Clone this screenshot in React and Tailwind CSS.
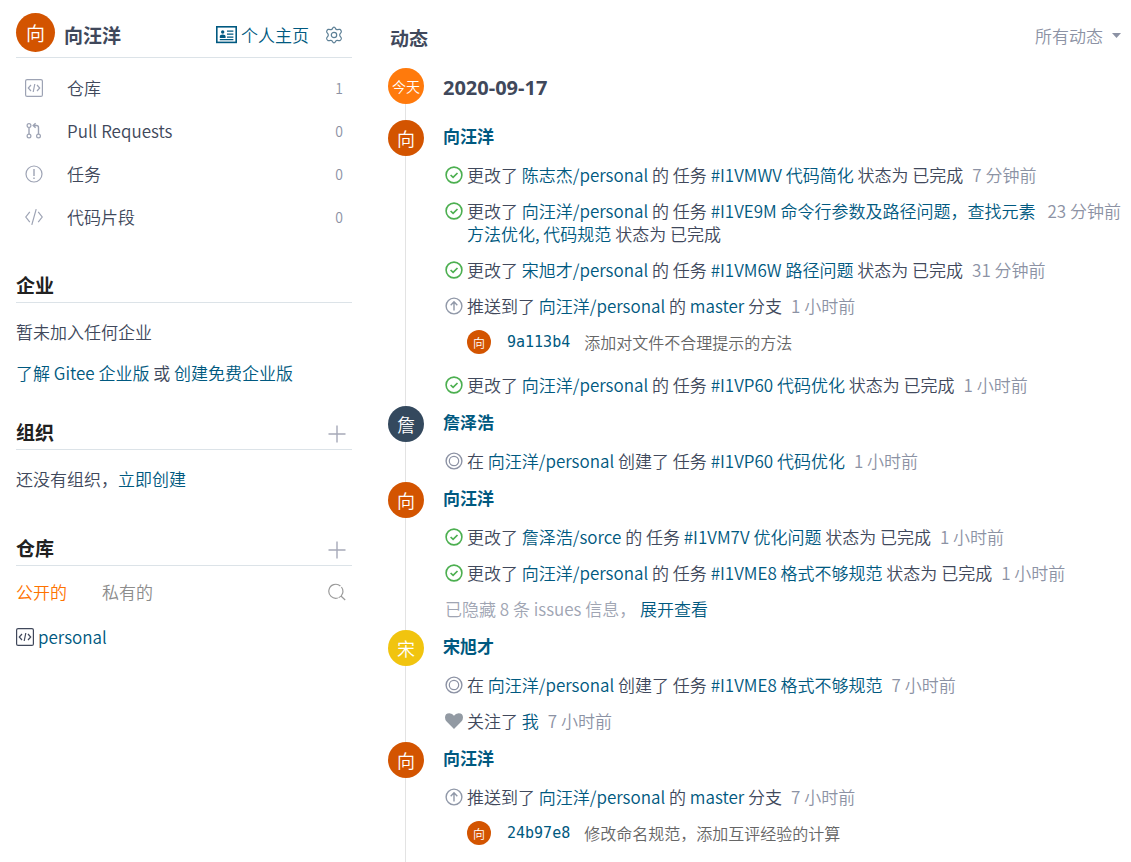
import React, { useState } from 'react';

const Svg = ({ className = 'size-[18px]', viewBox = '0 0 18 18', children }) => (
  <svg
    className={`shrink-0 ${className}`}
    viewBox={viewBox}
    fill="none"
    stroke="currentColor"
    strokeWidth="1.2"
    aria-hidden="true"
  >
    {children}
  </svg>
);

const RepoIcon = () => (
  <Svg>
    <rect x="0.6" y="0.6" width="16.8" height="16.8" rx="1.5" />
    <path d="M6 6 3.3 9 6 12M12 6l2.7 3L12 12M9.8 5 8.2 13" />
  </Svg>
);

const PullIcon = () => (
  <Svg>
    <circle cx="4" cy="3.6" r="1.9" />
    <circle cx="4" cy="14" r="1.9" />
    <circle cx="13.5" cy="14" r="1.9" />
    <path d="M4 5.5v6.6M13.5 12.1V5.5q0-2-2-2H8.5M10.6 1.2 8.2 3.5l2.4 2.3" strokeWidth="1.4" />
  </Svg>
);

const TaskIcon = () => (
  <Svg>
    <circle cx="9" cy="9" r="8" />
    <path d="M9 4v7M9 12.5v1.6" strokeWidth="1.4" />
  </Svg>
);

const CodeIcon = () => (
  <Svg>
    <path d="M4.8 3.8.8 9l4 5.2M13.2 3.8l4 5.2-4 5.2M11.2 1.2 6.8 16.8" />
  </Svg>
);

const CardIcon = () => (
  <Svg className="h-[18px] w-[21px]" viewBox="0 0 21 18">
    <rect x="0.8" y="0.8" width="19.4" height="15.6" strokeWidth="1.6" />
    <circle cx="6.7" cy="6" r="1.7" fill="currentColor" stroke="none" />
    <path d="M3.8 12V10q0-1.6 2.9-1.6T9.6 10v2z" fill="currentColor" stroke="none" />
    <path d="M11 5.2h6.4M11 8.2h6.4M11 11.2h6.4M3.8 13.6h13.6" />
  </Svg>
);

const GearIcon = () => (
  <Svg>
    <path d="M9 1.2q1 0 1.5 1.3.5 1.4 2 1.1 1.5-.4 2.4-.2.9.4 1.4 1.7.3 1-.7 2-.9.9-.9 1.9t.9 1.9q1 1 .7 2-.5 1.3-1.4 1.7-.9.2-2.4-.2-1.5-.3-2 1.1Q10 16.8 9 16.8t-1.5-1.3q-.5-1.4-2-1.1-1.5.4-2.4.2-.9-.4-1.4-1.7-.3-1 .7-2 .9-.9.9-1.9t-.9-1.9q-1-1-.7-2 .5-1.3 1.4-1.7.9-.2 2.4.2 1.5.3 2-1.1Q8 1.2 9 1.2z" />
    <circle cx="9" cy="9" r="2.7" />
  </Svg>
);

const PlusIcon = () => (
  <Svg>
    <path d="M9 0.5v17M0.5 9h17" strokeWidth="1.4" />
  </Svg>
);

const SearchIcon = () => (
  <Svg>
    <path d="M9.8 15A7 7 0 1 1 12.4 3M13.4 4A7 7 0 0 1 10.6 14.8M13.2 13.2l4 3.8" />
  </Svg>
);

const icons = {
  done: (
    <Svg className="size-[18px] text-[#4caf50]">
      <circle cx="9" cy="9" r="7.9" strokeWidth="1.6" />
      <path d="m5.6 9 2.5 2.4 4.4-4.4" strokeWidth="1.7" />
    </Svg>
  ),
  push: (
    <Svg className="size-[18px] text-[#9098a8]">
      <circle cx="9" cy="9" r="7.9" strokeWidth="1.4" />
      <path d="M9 13.6V5M5.7 8.2 9 4.8l3.3 3.4" strokeWidth="1.4" />
    </Svg>
  ),
  open: (
    <Svg className="size-[18px] text-[#8c92a4]">
      <circle cx="9" cy="9" r="7.9" strokeWidth="1.4" />
      <circle cx="9" cy="9" r="4.7" />
    </Svg>
  ),
  heart: (
    <Svg className="size-[18px] text-[#929aa3]">
      <path
        d="M9 17 1.6 9.6Q0 7.8 0 5.6 0 1.2 4.4 1.2 7.4 1.2 9 3.8q1.6-2.6 4.6-2.6Q18 1.2 18 5.6q0 2.2-1.6 4z"
        fill="currentColor"
        stroke="none"
      />
    </Svg>
  ),
};

const Link = ({ children, className = '' }) => (
  <a href="#" className={`text-[#005980] hover:underline ${className}`}>{children}</a>
);

const Avatar = ({ name, className = 'bg-[#d35400]' }) => (
  <span className={`flex size-9 shrink-0 items-center justify-center rounded-full text-[18px] text-white ${className}`}>
    {name}
  </span>
);

const Row = ({ icon, time, children }) => (
  <li className="flex items-start">
    <span className="flex h-[23px] w-6 shrink-0 items-center pl-[2px]">{icons[icon]}</span>
    <p>{children}</p>
    <time className="ml-[9px] shrink-0 text-[#8c92a4]">{time}</time>
  </li>
);

const Commit = ({ hash, children }) => (
  <li className="mb-[6px] flex h-6 items-center pl-6">
    <span className="flex size-6 shrink-0 items-center justify-center rounded-full bg-[#d35400] text-[12px] text-white">向</span>
    <Link className="ml-4 font-['DejaVu_Sans_Mono',monospace] text-[15px]">{hash}</Link>
    <span className="ml-[14px] text-base text-[#666666]">{children}</span>
  </li>
);

const StatusChange = ({ repo, issue, time }) => (
  <Row icon="done" time={time}>
    更改了 <Link>{repo}</Link> 的 任务 <Link>{issue}</Link> 状态为 已完成
  </Row>
);

const IssueCreated = ({ issue, time }) => (
  <Row icon="open" time={time}>
    在 <Link>向汪洋/personal</Link> 创建了 任务 <Link>{issue}</Link>
  </Row>
);

const Push = ({ time }) => (
  <Row icon="push" time={time}>
    推送到了 <Link>向汪洋/personal</Link> 的 <Link>master</Link> 分支
  </Row>
);

const Group = ({ user, color, children }) => (
  <li className="flex last:grow">
    <div className="flex w-9 shrink-0 flex-col">
      <Avatar name={user[0]} className={color} />
      <span className="ml-[17px] w-px grow bg-[#e3e3e3]" />
    </div>
    <div className="min-w-0 flex-1 pt-1 pb-[10px] pl-[19px]">
      <h3 className="mb-4 font-bold"><Link>{user}</Link></h3>
      <ul className="flex flex-col gap-[13px]">{children}</ul>
    </div>
  </li>
);

const menu = [
  { label: '仓库', count: 1, icon: <RepoIcon /> },
  { label: 'Pull Requests', count: 0, icon: <PullIcon /> },
  { label: '任务', count: 0, icon: <TaskIcon /> },
  { label: '代码片段', count: 0, icon: <CodeIcon /> },
];

const SectionTitle = ({ title, addLabel }) => (
  <div className="mt-[33px] flex items-center justify-between border-b border-[#dce3e8] pr-[6px] pb-[3px]">
    <h2 className="text-[19px] leading-7 font-bold text-[#212121]">{title}</h2>
    {addLabel && (
      <button type="button" aria-label={addLabel} className="mt-1 text-[#a6a9b8]">
        <PlusIcon />
      </button>
    )}
  </div>
);

const Sidebar = () => {
  const [tab, setTab] = useState('public');

  return (
    <aside className="w-[336px] shrink-0 pt-[13px] leading-6">
      <header className="flex items-center border-b border-[#dce3e8] pb-[5px]">
        <span className="flex size-[39px] items-center justify-center rounded-full bg-[#d35400] text-[19px] text-white">向</span>
        <div className="flex flex-1 items-center pt-1 pl-[9px]">
          <h1 className="text-[19px] font-bold">向汪洋</h1>
          <Link className="ml-auto flex items-center gap-1"><CardIcon />个人主页</Link>
          <button type="button" aria-label="设置" className="mr-[9px] ml-4 text-[#5c7f95]"><GearIcon /></button>
        </div>
      </header>

      <nav className="pt-2">
        {menu.map((item) => (
          <a key={item.label} href="#" className="flex h-[43px] items-center px-[9px]">
            <span className="text-[#9da3b4]">{item.icon}</span>
            <span className="ml-6">{item.label}</span>
            <span className="ml-auto text-sm text-[#8c92a4]">{item.count}</span>
          </a>
        ))}
      </nav>

      <section>
        <SectionTitle title="企业" />
        <p className="pt-[17px]">暂未加入任何企业</p>
        <p className="pt-[17px]">
          <Link>了解 Gitee 企业版</Link> 或 <Link>创建免费企业版</Link>
        </p>
      </section>

      <section className="pb-[10px]">
        <SectionTitle title="组织" addLabel="创建组织" />
        <p className="pt-[17px]">还没有组织，<Link>立即创建</Link></p>
      </section>

      <section>
        <SectionTitle title="仓库" addLabel="创建仓库" />
        <div className="flex items-center pt-[14px] pr-[6px]">
          <button type="button" onClick={() => setTab('public')} className={tab === 'public' ? 'text-[#fe7300]' : 'text-[#8c8c8c]'}>
            公开的
          </button>
          <button type="button" onClick={() => setTab('private')} className={`ml-[35px] ${tab === 'private' ? 'text-[#fe7300]' : 'text-[#8c8c8c]'}`}>
            私有的
          </button>
          <button type="button" aria-label="搜索仓库" className="ml-auto text-[#9a9a9a]"><SearchIcon /></button>
        </div>
        <div className="mt-[21px] flex items-center gap-1">
          <RepoIcon />
          <Link>personal</Link>
        </div>
      </section>
    </aside>
  );
};

const Feed = () => (
  <main className="flex min-h-screen min-w-0 flex-1 flex-col">
    <header className="flex items-start justify-between pt-6 pb-4 pl-[2px]">
      <h2 className="text-[19px] leading-7 font-bold">动态</h2>
      <div className="relative flex items-center text-[#8c92a4]">
        <select aria-label="动态类型" className="appearance-none bg-transparent pr-[18px]">
          <option>所有动态</option>
        </select>
        <svg className="pointer-events-none absolute right-0 h-[5px] w-[9px]" viewBox="0 0 9 5" fill="currentColor" aria-hidden="true">
          <path d="M0 0h9L4.5 5z" />
        </svg>
      </div>
    </header>

    <ol className="flex grow flex-col">
      <li className="flex">
        <div className="flex w-9 shrink-0 flex-col">
          <span className="flex size-9 items-center justify-center rounded-full bg-[#ff7a0c] text-sm text-white">今天</span>
          <span className="ml-[17px] h-4 w-px bg-[#e3e3e3]" />
        </div>
        <h3 className="pt-[5px] pl-[19px] font-['Open_Sans','Noto_Sans_CJK_SC',sans-serif] text-[20px] leading-[30px] font-bold">2020-09-17</h3>
      </li>

      <Group user="向汪洋">
        <StatusChange repo="陈志杰/personal" issue="#I1VMWV 代码简化" time="7 分钟前" />
        <StatusChange repo="向汪洋/personal" issue="#I1VE9M 命令行参数及路径问题，查找元素方法优化, 代码规范" time="23 分钟前" />
        <StatusChange repo="宋旭才/personal" issue="#I1VM6W 路径问题" time="31 分钟前" />
        <Push time="1 小时前" />
        <Commit hash="9a113b4">添加对文件不合理提示的方法</Commit>
        <StatusChange repo="向汪洋/personal" issue="#I1VP60 代码优化" time="1 小时前" />
      </Group>

      <Group user="詹泽浩" color="bg-[#34495e]">
        <IssueCreated issue="#I1VP60 代码优化" time="1 小时前" />
      </Group>

      <Group user="向汪洋">
        <StatusChange repo="詹泽浩/sorce" issue="#I1VM7V 优化问题" time="1 小时前" />
        <StatusChange repo="向汪洋/personal" issue="#I1VME8 格式不够规范" time="1 小时前" />
        <li className="pl-[2px] text-[#a0a5b3]">
          已隐藏 8 条 issues 信息， <Link>展开查看</Link>
        </li>
      </Group>

      <Group user="宋旭才" color="bg-[#f1c40f]">
        <IssueCreated issue="#I1VME8 格式不够规范" time="7 小时前" />
        <Row icon="heart" time="7 小时前">关注了 <Link>我</Link></Row>
      </Group>

      <Group user="向汪洋">
        <Push time="7 小时前" />
        <Commit hash="24b97e8">修改命名规范，添加互评经验的计算</Commit>
      </Group>
    </ol>
  </main>
);

export default function App() {
  return (
    <div
      lang="zh-CN"
      className="flex min-h-screen gap-9 bg-white pr-[10px] pl-4 font-['Noto_Sans_CJK_SC',sans-serif] text-[17px] leading-[23px] font-[350] text-[#40485b]"
    >
      <Sidebar />
      <Feed />
    </div>
  );
}
